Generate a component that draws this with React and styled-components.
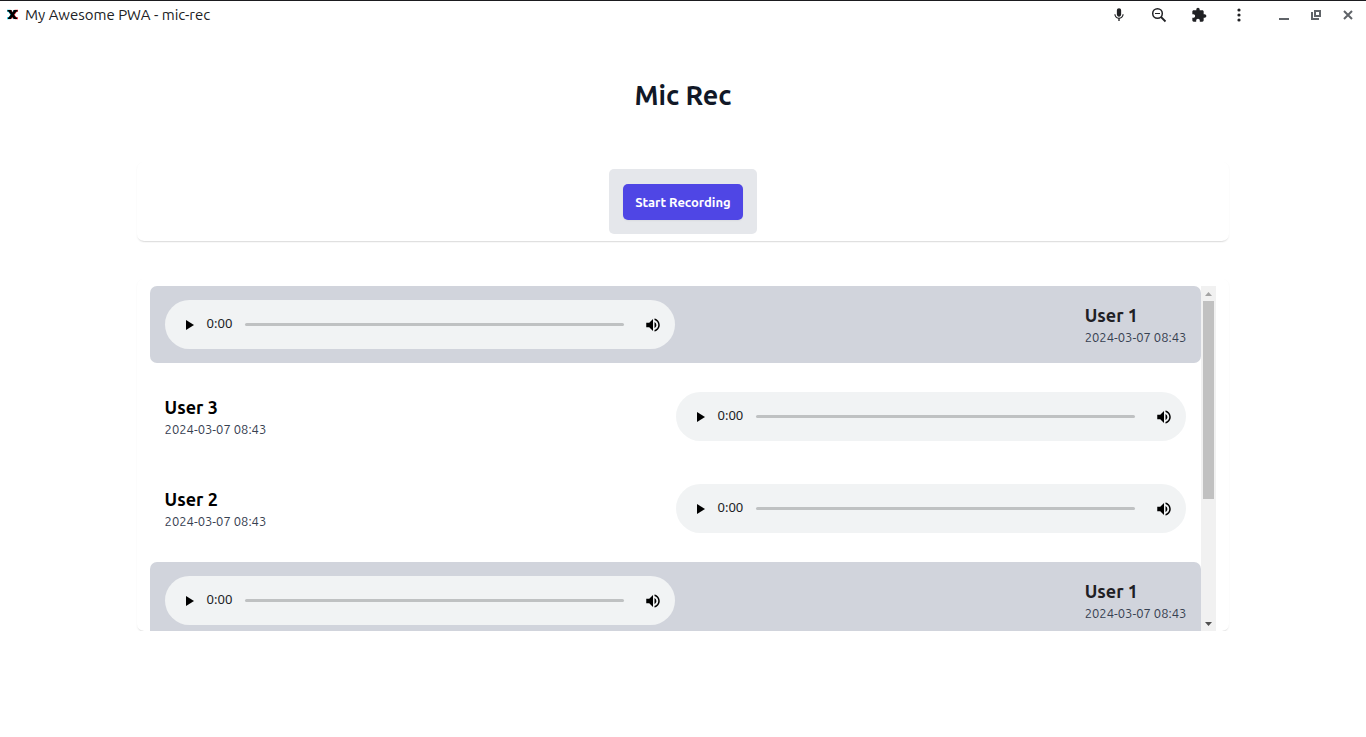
import React, { useState } from "react";
import styled, { createGlobalStyle } from "styled-components";

const GlobalStyle = createGlobalStyle`
  *, *::before, *::after { box-sizing: border-box; }
  body {
    margin: 0;
    background: #fff;
    font-family: Ubuntu, "Noto Sans", "Open Sans", sans-serif;
    color: #000;
  }
  button { font: inherit; border: 0; padding: 0; background: none; cursor: pointer; }
  h1, h2, p, ul { margin: 0; padding: 0; }
`;

const TitleBar = styled.header`
  display: flex;
  align-items: center;
  gap: 6px;
  height: 29px;
  padding: 0 9px 0 6px;
  border-top: 1px solid #1b1b1f;
`;

const AppName = styled.span`
  flex: 1;
  font-size: 15px;
  line-height: 20px;
  color: #202124;
`;

const AppLogo = styled.svg`
  display: block;
  margin-bottom: 2px;
`;

const BarActions = styled.nav`
  display: flex;
  align-items: center;
  gap: 22px;
  margin-right: 21px;
`;

const WindowControls = styled.div`
  display: flex;
  align-items: center;
  gap: 14px;
`;

const IconButton = styled.button`
  display: grid;
  place-items: center;
  width: 18px;
  height: 18px;
  color: ${(p) => (p.$muted ? "#5f6368" : "#202124")};
`;

const Page = styled.main`
  width: 80%;
  margin: 0 auto;
  padding-top: 48px;
`;

const Heading = styled.h1`
  font-size: 27px;
  line-height: 36px;
  font-weight: 700;
  text-align: center;
  color: #111827;
`;

const Panel = styled.section`
  padding: 7px 13px ${(p) => (p.$flush ? "0" : "7px")};
  margin-top: ${(p) => p.$space}px;
  border-radius: 7px;
  background: #fff;
  box-shadow: 0 1px 2px rgba(0, 0, 0, 0.06), 0 2px 2px -2px rgba(0, 0, 0, 0.3);
`;

const RecorderBox = styled.div`
  width: fit-content;
  margin: 0 auto;
  padding: 15px 14px 14px;
  border-radius: 5px;
  background: #e5e7eb;
`;

const RecordButton = styled.button`
  min-width: 120px;
  height: 36px;
  display: block;
  && {
    border-radius: 5px;
    background: #4f46e5;
    color: #fff;
    font-size: 13px;
    line-height: 18px;
    font-weight: 700;
    box-shadow: 0 1px 2px rgba(0, 0, 0, 0.05);
  }
`;

const ScrollArea = styled.div`
  display: flex;
  height: 345px;
`;

const MessageList = styled.ul`
  flex: 1;
  display: flex;
  flex-direction: column;
  gap: 15px;
  list-style: none;
  overflow-y: auto;
  scrollbar-width: none;
`;

const Message = styled.li`
  flex: none;
  display: flex;
  flex-direction: ${(p) => (p.$own ? "row" : "row-reverse")};
  justify-content: space-between;
  align-items: center;
  padding: 14px 15px;
  border-radius: 7px;
  background: ${(p) => (p.$own ? "#d1d4dc" : "transparent")};
`;

const UserName = styled.h2`
  font-size: 18px;
  line-height: 25px;
  font-weight: 700;
  color: ${(p) => (p.$own ? "#1f2024" : "#000")};
`;

const Stamp = styled.p`
  font-size: 13px;
  line-height: 18px;
  color: #374151;
`;

const Player = styled.div`
  display: flex;
  align-items: center;
  width: 50%;
  height: 49px;
  padding: 0 13px 0 16px;
  border-radius: 25px;
  background: #f1f3f4;
`;

const PlayerButton = styled(IconButton)`
  color: #000;
`;

const Elapsed = styled.span`
  margin: 0 13px 0 8px;
  padding-bottom: 3px;
  font-family: "Noto Sans", "Open Sans", sans-serif;
  font-size: 13px;
  line-height: 18px;
  color: #202124;
`;

const Seek = styled.input`
  flex: 1;
  min-width: 0;
  height: 3px;
  margin: 0 20px 0 0;
  border-radius: 2px;
  background: #bfc1c2;
  appearance: none;
  &::-webkit-slider-thumb { appearance: none; width: 0; height: 0; }
`;

const ScrollTrack = styled.div`
  display: flex;
  flex-direction: column;
  width: 15px;
  background: #f1f1f1;
`;

const ScrollArrow = styled.button`
  display: grid;
  place-items: center;
  height: 15px;
  color: ${(p) => (p.$dim ? "#a3a3a3" : "#505050")};
`;

const ScrollThumb = styled.div`
  height: 198px;
  margin: 0 2px auto;
  background: #c1c1c1;
`;

const messages = [
  { id: 1, user: "User 1", own: true },
  { id: 2, user: "User 3", own: false },
  { id: 3, user: "User 2", own: false },
  { id: 4, user: "User 1", own: true },
];

const Glyph = ({ size = 16, d }) => (
  <svg width={size} height={size} viewBox="0 0 24 24" fill="currentColor" aria-hidden="true">
    <path d={d} />
  </svg>
);

const MIC = "M12 14.500c1.800 0 3.200-1.400 3.200-3.200V5c0-1.800-1.400-3.200-3.200-3.200S8.800 3.200 8.800 5v6.300c0 1.800 1.400 3.200 3.200 3.200zm5.300-3.500c0 3-2.540 5.100-5.300 5.100S6.700 14 6.700 11H5c0 3.410 2.720 6.230 6 6.720V21h2v-3.280c3.280-.48 6-3.300 6-6.720h-1.700z";
const PUZZLE = "M20.5 11H19V7c0-1.1-.9-2-2-2h-4V3.5C13 2.12 11.88 1 10.5 1S8 2.12 8 3.5V5H4c-1.1 0-1.99.9-1.99 2v3.8H3.5c1.49 0 2.7 1.21 2.7 2.7s-1.21 2.7-2.7 2.7H2V20c0 1.1.9 2 2 2h3.8v-1.5c0-1.49 1.21-2.7 2.7-2.7 1.49 0 2.7 1.21 2.7 2.7V22H17c1.1 0 2-.9 2-2v-4h1.5c1.38 0 2.5-1.12 2.5-2.5S21.88 11 20.5 11z";
const VOLUME = "M3 9v6h4l5 5V4L7 9H3zm13.5 3A4.5 4.5 0 0 0 14 7.97v8.05c1.48-.73 2.5-2.25 2.5-4.02zM14 3.23v2.06c2.89.86 5 3.54 5 6.71s-2.11 5.85-5 6.71v2.06c4.01-.91 7-4.49 7-8.77s-2.99-7.86-7-8.77z";

function AudioPlayer({ label }) {
  const [position, setPosition] = useState(0);
  return (
    <Player>
      <PlayerButton type="button" aria-label={`Play ${label}`}>
        <svg width="18" height="18" viewBox="0 0 18 18" aria-hidden="true">
          <path d="M5 4v10l8-5z" fill="currentColor" />
        </svg>
      </PlayerButton>
      <Elapsed>0:00</Elapsed>
      <Seek
        type="range"
        aria-label={`Seek ${label}`}
        value={position}
        onChange={(e) => setPosition(Number(e.target.value))}
      />
      <PlayerButton type="button" aria-label={`Mute ${label}`}>
        <Glyph size={18} d={VOLUME} />
      </PlayerButton>
    </Player>
  );
}

export default function App() {
  return (
    <>
      <GlobalStyle />
      <TitleBar>
        <AppLogo width="13" height="11" viewBox="0 0 13 11" fill="none" aria-hidden="true">
          <path d="M2.500 1.500l5.500 8M8.500 1.500l-5.500 8M1 1.800h3M1 9.200h3" stroke="#22cfe8" strokeWidth="2" />
          <path d="M4.500 1.500l5.500 8M10.500 1.500l-5.500 8M9 1.800h3M9 9.200h3" stroke="#f0303c" strokeWidth="2" />
          <path d="M3.500 1.500l5.500 8M9.500 1.500l-6 8" stroke="#000" strokeWidth="2.600" />
          <path d="M1.500 1.700h4M7.500 1.700h4M2 9.300h3M8 9.300h3" stroke="#000" strokeWidth="1.400" />
        </AppLogo>
        <AppName>My Awesome PWA - mic-rec</AppName>
        <BarActions aria-label="App">
          <IconButton type="button" aria-label="Microphone"><Glyph d={MIC} /></IconButton>
          <IconButton type="button" aria-label="Zoom out">
            <svg width="18" height="18" viewBox="0 0 18 18" fill="none" stroke="currentColor" aria-hidden="true">
              <circle cx="7.500" cy="7.500" r="4.800" strokeWidth="1.500" />
              <path d="M11 11l4.500 4.500" strokeWidth="1.800" />
              <path d="M5 7.500h5" strokeWidth="1" />
            </svg>
          </IconButton>
          <IconButton type="button" aria-label="Extensions"><Glyph d={PUZZLE} /></IconButton>
          <IconButton type="button" aria-label="Menu">
            <svg width="16" height="16" viewBox="0 0 16 16" fill="currentColor" aria-hidden="true">
              <circle cx="8" cy="3" r="1.600" />
              <circle cx="8" cy="8" r="1.600" />
              <circle cx="8" cy="13" r="1.600" />
            </svg>
          </IconButton>
        </BarActions>
        <WindowControls>
          <IconButton $muted type="button" aria-label="Minimize">
            <svg width="16" height="16" viewBox="0 0 16 16" aria-hidden="true">
              <path d="M3 11h10v2H3z" fill="currentColor" />
            </svg>
          </IconButton>
          <IconButton $muted type="button" aria-label="Restore">
            <svg width="16" height="16" viewBox="0 0 16 16" fill="none" stroke="currentColor" strokeWidth="2" aria-hidden="true">
              <path d="M7 4h5v5H7zM4 5v7h7" />
            </svg>
          </IconButton>
          <IconButton $muted type="button" aria-label="Close">
            <svg width="16" height="16" viewBox="0 0 16 16" fill="none" stroke="currentColor" strokeWidth="2" aria-hidden="true">
              <path d="M4 4l8 8M12 4l-8 8" />
            </svg>
          </IconButton>
        </WindowControls>
      </TitleBar>

      <Page>
        <Heading>Mic Rec</Heading>
        <Panel $space={49} aria-label="Recorder">
          <RecorderBox>
            <RecordButton type="button">Start Recording</RecordButton>
          </RecorderBox>
        </Panel>
        <Panel $space={38} $flush aria-label="Recordings">
          <ScrollArea>
            <MessageList>
              {messages.map(({ id, user, own }) => (
                <Message key={id} $own={own}>
                  <AudioPlayer label={`recording ${id}`} />
                  <div>
                    <UserName $own={own}>{user}</UserName>
                    <Stamp>2024-03-07 08:43</Stamp>
                  </div>
                </Message>
              ))}
            </MessageList>
            <ScrollTrack>
              <ScrollArrow $dim type="button" aria-label="Scroll up">
                <svg width="7" height="4" viewBox="0 0 7 4" aria-hidden="true"><path d="M0 4L3.500 0 7 4z" fill="currentColor" /></svg>
              </ScrollArrow>
              <ScrollThumb />
              <ScrollArrow type="button" aria-label="Scroll down">
                <svg width="7" height="4" viewBox="0 0 7 4" aria-hidden="true"><path d="M0 0L3.500 4 7 0z" fill="currentColor" /></svg>
              </ScrollArrow>
            </ScrollTrack>
          </ScrollArea>
        </Panel>
      </Page>
    </>
  );
}
